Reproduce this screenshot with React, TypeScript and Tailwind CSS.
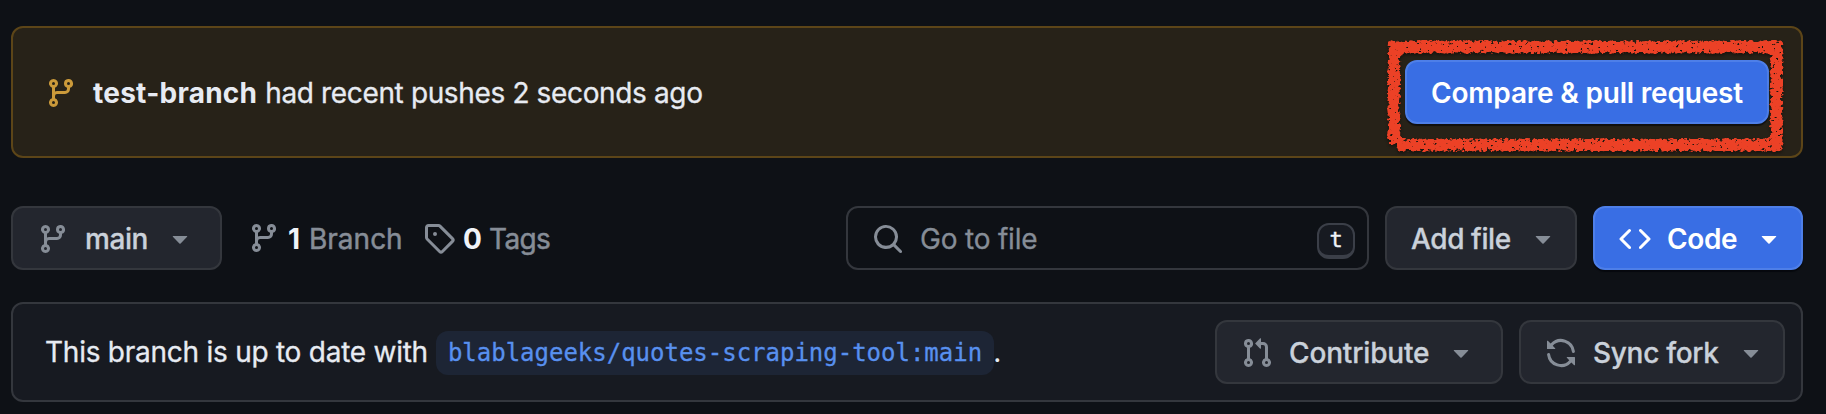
import React from "react";

const PATHS = {
  branch:
    "M9.5 3.25a2.25 2.25 0 1 1 3 2.122V6A2.5 2.5 0 0 1 10 8.5H6a1 1 0 0 0-1 1v1.128a2.251 2.251 0 1 1-1.5 0V5.372a2.25 2.25 0 1 1 1.5 0v1.836A2.493 2.493 0 0 1 6 7h4a1 1 0 0 0 1-1v-.628A2.25 2.25 0 0 1 9.5 3.25Zm-6 0a.75.75 0 1 0 1.5 0 .75.75 0 0 0-1.5 0Zm8.25-.75a.75.75 0 1 0 0 1.5.75.75 0 0 0 0-1.5ZM4.25 12a.75.75 0 1 0 0 1.5.75.75 0 0 0 0-1.5Z",
  pull: "M1.5 3.25a2.25 2.25 0 1 1 3 2.122v5.256a2.251 2.251 0 1 1-1.5 0V5.372A2.25 2.25 0 0 1 1.5 3.25Zm5.677-.177L9.573.677A.25.25 0 0 1 10 .854V2.5h1A2.5 2.5 0 0 1 13.5 5v5.628a2.251 2.251 0 1 1-1.5 0V5a1 1 0 0 0-1-1h-1v1.646a.25.25 0 0 1-.427.177L7.177 3.427a.25.25 0 0 1 0-.354ZM3.75 2.5a.75.75 0 1 0 0 1.5.75.75 0 0 0 0-1.5Zm0 9.5a.75.75 0 1 0 0 1.5.75.75 0 0 0 0-1.5Zm8.25.75a.75.75 0 1 0 1.5 0 .75.75 0 0 0-1.5 0Z",
  sync: "M1.705 8.005a.75.75 0 0 1 .834.656 5.5 5.5 0 0 0 9.592 2.97l-1.204-1.204a.25.25 0 0 1 .177-.427h3.646a.25.25 0 0 1 .25.25v3.646a.25.25 0 0 1-.427.177l-1.38-1.38A7.002 7.002 0 0 1 1.05 8.84a.75.75 0 0 1 .656-.834ZM8 2.5a5.487 5.487 0 0 0-4.131 1.869l1.204 1.204A.25.25 0 0 1 4.896 6H1.25A.25.25 0 0 1 1 5.75V2.104a.25.25 0 0 1 .427-.177l1.38 1.38A7.002 7.002 0 0 1 14.95 7.16a.75.75 0 0 1-1.49.178A5.5 5.5 0 0 0 8 2.5Z",
  tag: "M1 7.775V2.75C1 1.784 1.784 1 2.75 1h5.025c.464 0 .91.184 1.238.513l6.25 6.25a1.75 1.75 0 0 1 0 2.474l-5.026 5.026a1.75 1.75 0 0 1-2.474 0l-6.25-6.25A1.752 1.752 0 0 1 1 7.775Zm1.5 0c0 .066.026.13.073.177l6.25 6.25a.25.25 0 0 0 .354 0l5.025-5.025a.25.25 0 0 0 0-.354l-6.25-6.25a.25.25 0 0 0-.177-.073H2.75a.25.25 0 0 0-.25.25ZM6 5a1 1 0 1 1 0 2 1 1 0 0 1 0-2Z",
  search:
    "M10.68 11.74a6 6 0 0 1-7.922-8.982 6 6 0 0 1 8.982 7.922l3.04 3.04a.749.749 0 0 1-.326 1.275.749.749 0 0 1-.734-.215ZM11.5 7a4.499 4.499 0 1 0-8.997 0A4.499 4.499 0 0 0 11.5 7Z",
  code: "m11.28 3.22 4.25 4.25a.75.75 0 0 1 0 1.06l-4.25 4.25a.749.749 0 0 1-1.275-.326.749.749 0 0 1 .215-.734L13.94 8l-3.72-3.72a.749.749 0 0 1 .326-1.275.749.749 0 0 1 .734.215Zm-6.56 0a.751.751 0 0 1 1.042.018.751.751 0 0 1 .018 1.042L2.06 8l3.72 3.72a.749.749 0 0 1-.326 1.275.749.749 0 0 1-.734-.215L.47 8.53a.75.75 0 0 1 0-1.06Z",
  caret: "m4.427 7.427 3.396 3.396a.25.25 0 0 0 .354 0l3.396-3.396A.25.25 0 0 0 11.396 7H4.604a.25.25 0 0 0-.177.427Z",
};

function Icon({ name, className = "" }: { name: keyof typeof PATHS; className?: string }) {
  return (
    <svg viewBox="0 0 16 16" fill="currentColor" className={`size-8 shrink-0 ${className}`} aria-hidden="true">
      <path fillRule="evenodd" d={PATHS[name]} />
    </svg>
  );
}

function Button({
  children,
  icon,
  caret = true,
  primary = false,
  className = "",
}: {
  children: string;
  icon?: keyof typeof PATHS;
  caret?: boolean;
  primary?: boolean;
  className?: string;
}) {
  const tone = primary
    ? "bg-[#396ee4] border-[#4e7fe8] text-white font-semibold shadow-[0_2px_1px_rgba(1,4,9,0.6)]"
    : "bg-[#23262e] border-[#34373d] text-[#cad1da] font-medium [-webkit-text-stroke:0.3px]";
  const iconTone = primary ? "text-white" : "text-[#868d97]";
  return (
    <button
      className={`flex h-16 shrink-0 items-center rounded-[12px] border-2 whitespace-nowrap ${tone} ${className}`}
    >
      {icon && <Icon name={icon} className={`mt-[2px] mr-4 ${iconTone}`} />}
      <span className="pt-[2px]">{children}</span>
      {caret && <Icon name="caret" className={`ml-auto ${iconTone}`} />}
    </button>
  );
}

function ChalkFrame() {
  return (
    <svg
      className="pointer-events-none absolute -top-[26px] -left-[25px] h-[124px] w-[410px]"
      viewBox="0 0 410 124"
      fill="none"
      aria-hidden="true"
    >
      <filter id="chalk" filterUnits="userSpaceOnUse" x="0" y="0" width="410" height="124" colorInterpolationFilters="sRGB">
        <feGaussianBlur in="SourceAlpha" stdDeviation="2" result="soft" />
        <feTurbulence type="fractalNoise" baseFrequency="0.28 0.34" numOctaves="3" seed="7" />
        <feColorMatrix values="0 0 0 0 0  0 0 0 0 0  0 0 0 0 0  0 0 0 1 0" result="grain" />
        <feComposite in="soft" in2="grain" operator="arithmetic" k1="1.8" k2="0.03" k3="0" k4="0" />
        <feComponentTransfer result="rough">
          <feFuncA type="linear" slope="7" intercept="-2.95" />
        </feComponentTransfer>
        <feFlood floodColor="#ec4126" />
        <feComposite in2="rough" operator="in" result="ink" />
        <feDropShadow in="ink" dx="0" dy="2" stdDeviation="1.5" floodColor="#000000" floodOpacity="0.4" />
      </filter>
      <g filter="url(#chalk)" stroke="#ec4126" strokeWidth="12.5">
        <path d="M8 13H403" />
        <path d="M14 8V110" />
        <path d="M396.5 8V117" />
        <path d="M17 111H402" />
      </g>
    </svg>
  );
}

export default function App() {
  return (
    <main className="h-[414px] w-[1826px] overflow-hidden bg-[#0e1116] pt-[26px] pr-[23px] pl-[11px] font-['Inter',sans-serif] text-[28px] leading-[42px] text-[#e7ebf2]">
      <section className="flex h-[132px] items-center rounded-[12px] border-2 border-[#5c4518] bg-[#272218] pr-8 pl-8">
        <Icon name="branch" className="mr-4 mt-[2px] text-[#cb9a3a]" />
        <p className="flex gap-[8px] pt-[2px] whitespace-nowrap">
          <b className="font-bold tracking-[0.25px]">test-branch</b>
          <span className="tracking-[-0.36px] [-webkit-text-stroke:0.3px]">had recent pushes 2 seconds ago</span>
        </p>
        <div className="relative ml-auto">
          <Button primary caret={false} className="w-[364px] justify-center tracking-[-0.2px]">
            Compare &amp; pull request
          </Button>
          <ChalkFrame />
        </div>
      </section>

      <div className="mt-12 flex h-16 items-center">
        <Button icon="branch" className="w-[211px] pr-6 pl-6 tracking-[-0.4px]">
          main
        </Button>
        <a className="ml-[26px] flex w-[175px] items-center">
          <Icon name="branch" className="mr-[8px] text-[#868d97]" />
          <b className="w-[21px] shrink-0 pt-[2px] font-bold text-[#f0f3f8]">1</b>
          <span className="pt-[2px] text-[#868d97] [-webkit-text-stroke:0.5px]">Branch</span>
        </a>
        <a className="flex items-center">
          <Icon name="tag" className="mr-[8px] text-[#868d97]" />
          <b className="w-[26px] shrink-0 pt-[2px] font-bold text-[#f0f3f8]">0</b>
          <span className="pt-[2px] tracking-[-0.6px] text-[#868d97] [-webkit-text-stroke:0.5px]">Tags</span>
        </a>
        <div className="ml-auto flex h-16 w-[523px] items-center rounded-[12px] border-2 border-[#34373d] pr-3 pl-6">
          <Icon name="search" className="mt-[2px] mr-4 text-[#868d97]" />
          <span className="pt-[2px] tracking-[-0.2px] text-[#868d97] [-webkit-text-stroke:0.3px]">Go to file</span>
          <kbd className="mt-[5px] ml-auto flex h-9 w-[38px] items-center justify-center rounded-[12px] border-2 border-b-4 border-[#3b3f48] bg-[#171a21] font-['DejaVu_Sans_Mono',monospace] text-[22px] leading-none text-[#f0f3f8] [-webkit-text-stroke:0.4px]">
            t
          </kbd>
        </div>
        <Button className="ml-4 w-[192px] pr-4 pl-6 tracking-[-0.4px]">Add file</Button>
        <Button primary icon="code" className="ml-4 w-[210px] pr-4 pl-6 tracking-[-0.4px]">
          Code
        </Button>
      </div>

      <section className="mt-8 flex h-[100px] items-center rounded-[12px] border-2 border-[#34373d] bg-[#171a21] pr-4 pl-8">
        <p className="flex items-center whitespace-nowrap">
          <span className="tracking-[-0.25px] [-webkit-text-stroke:0.3px]">This branch is up to date with</span>
          <code className="mt-[2px] ml-[8px] flex h-11 items-center rounded-[12px] bg-[#1d2535] px-3 font-['DejaVu_Sans_Mono',monospace] text-[24px] tracking-[-0.01px] text-[#5890ef] [-webkit-text-stroke:0.3px]">
            blablageeks/quotes-scraping-tool:main
          </code>
          <span className="-ml-px">.</span>
        </p>
        <Button icon="pull" className="ml-auto w-[288px] pr-6 pl-6 tracking-[-0.15px]">
          Contribute
        </Button>
        <Button icon="sync" className="ml-4 w-[266px] pr-4 pl-6 tracking-[-0.3px]">
          Sync fork
        </Button>
      </section>
    </main>
  );
}
